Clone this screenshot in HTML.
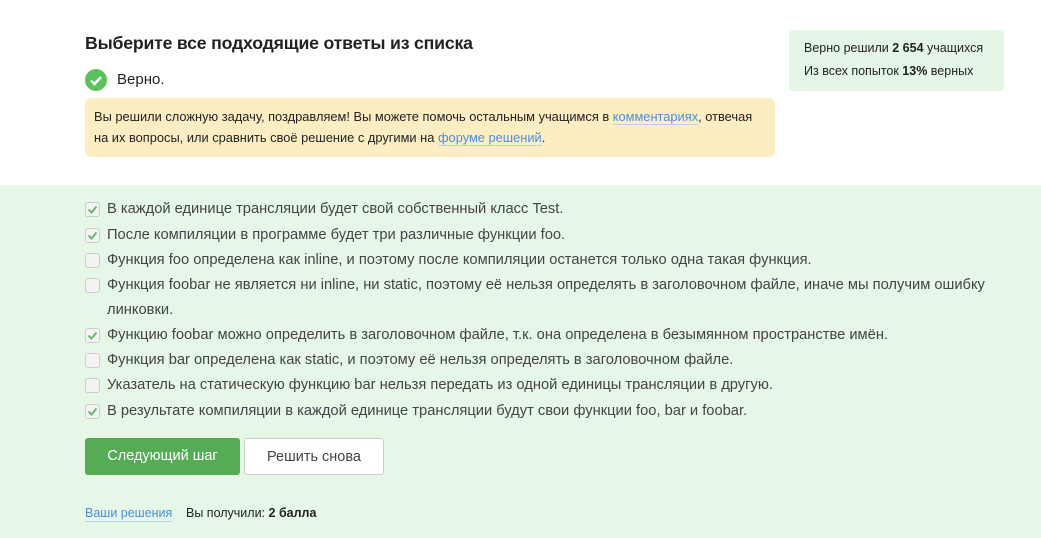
<!DOCTYPE html>
<html><head><meta charset="utf-8"><style>
body{margin:0;width:1041px;height:538px;overflow:hidden;background:#fff;font-family:"Liberation Sans",sans-serif;color:#222;position:relative}
svg{display:block}
h1{position:absolute;left:85px;top:33px;margin:0;font-size:17.7px;font-weight:bold;color:#222;letter-spacing:-0.2px}
.ok{position:absolute;left:85px;top:69px;width:22px;height:22px;border-radius:50%;background:#5cc35c}
.okt{position:absolute;left:117px;top:71px;font-size:15px}
.msg{position:absolute;left:85px;top:98px;width:690px;height:59px;background:#fdedc2;border-radius:6px;font-size:12.85px;line-height:21px;padding:8px 0 0 9px;box-sizing:border-box;color:#222;white-space:nowrap}
.msg a{color:#4a8fe0;text-decoration:none;border-bottom:1px solid #b5d0f0}
.stat{position:absolute;left:789px;top:30px;width:215px;height:61px;background:#e6f6e6;border-radius:4px;font-size:12.5px;line-height:23px;padding:7px 0 0 15px;box-sizing:border-box}
.green{position:absolute;left:0;top:185px;width:1041px;height:353px;background:#e7f7e7}
.opt{position:absolute;left:85px;font-size:14.7px;color:#444;line-height:25px}
.cb{position:absolute;left:0;top:5px;width:13px;height:13px;border:1px solid #ccc;border-radius:3px;background:#f3f3f3}
.opt span{position:absolute;left:22px;white-space:nowrap}
.btn{position:absolute;top:438px;height:37px;border-radius:3px;font-size:14.5px;text-align:center;line-height:37px;box-sizing:border-box}
</style></head><body>
<h1>Выберите все подходящие ответы из списка</h1>
<div class="ok"><svg width="22" height="22"><path d="M6 11.5l3.5 3.5 6.5-7" stroke="#fff" stroke-width="2.6" fill="none"/></svg></div>
<div class="okt">Верно.</div>
<div class="msg">Вы решили сложную задачу, поздравляем! Вы можете помочь остальным учащимся в <a>комментариях</a>, отвечая<br>на их вопросы, или сравнить своё решение с другими на <a>форуме решений</a>.</div>
<div class="stat">Верно решили <b>2 654</b> учащихся<br>Из всех попыток <b>13%</b> верных</div>
<div class="green"></div>
<div class="opt" style="top:197px"><div class="cb"><svg width="13" height="13"><path d="M2.5 6.5l3 3 5-6" stroke="#5cb85c" stroke-width="1.8" fill="none"/></svg></div><span>В каждой единице трансляции будет свой собственный класс Test.</span></div>
<div class="opt" style="top:223px"><div class="cb"><svg width="13" height="13"><path d="M2.5 6.5l3 3 5-6" stroke="#5cb85c" stroke-width="1.8" fill="none"/></svg></div><span>После компиляции в программе будет три различные функции foo.</span></div>
<div class="opt" style="top:248px"><div class="cb"></div><span>Функция foo определена как inline, и поэтому после компиляции останется только одна такая функция.</span></div>
<div class="opt" style="top:273px"><div class="cb"></div><span>Функция foobar не является ни inline, ни static, поэтому её нельзя определять в заголовочном файле, иначе мы получим ошибку<br>линковки.</span></div>
<div class="opt" style="top:323px"><div class="cb"><svg width="13" height="13"><path d="M2.5 6.5l3 3 5-6" stroke="#5cb85c" stroke-width="1.8" fill="none"/></svg></div><span>Функцию foobar можно определить в заголовочном файле, т.к. она определена в безымянном пространстве имён.</span></div>
<div class="opt" style="top:348px"><div class="cb"></div><span>Функция bar определена как static, и поэтому её нельзя определять в заголовочном файле.</span></div>
<div class="opt" style="top:373px"><div class="cb"></div><span>Указатель на статическую функцию bar нельзя передать из одной единицы трансляции в другую.</span></div>
<div class="opt" style="top:399px"><div class="cb"><svg width="13" height="13"><path d="M2.5 6.5l3 3 5-6" stroke="#5cb85c" stroke-width="1.8" fill="none"/></svg></div><span>В результате компиляции в каждой единице трансляции будут свои функции foo, bar и foobar.</span></div>
<div class="btn" style="left:85px;width:155px;background:#54ad54;color:#fff">Следующий шаг</div>
<div class="btn" style="left:244px;width:140px;background:#fff;border:1px solid #ccc;color:#444">Решить снова</div>
<div style="position:absolute;left:85px;top:505px;font-size:12.5px;color:#4a8fe0;border-bottom:1px solid #b5d0f0;line-height:16px">Ваши решения</div>
<div style="position:absolute;left:186px;top:505px;font-size:12.5px;line-height:16px;color:#222">Вы получили: <b>2 балла</b></div>
</body></html>
